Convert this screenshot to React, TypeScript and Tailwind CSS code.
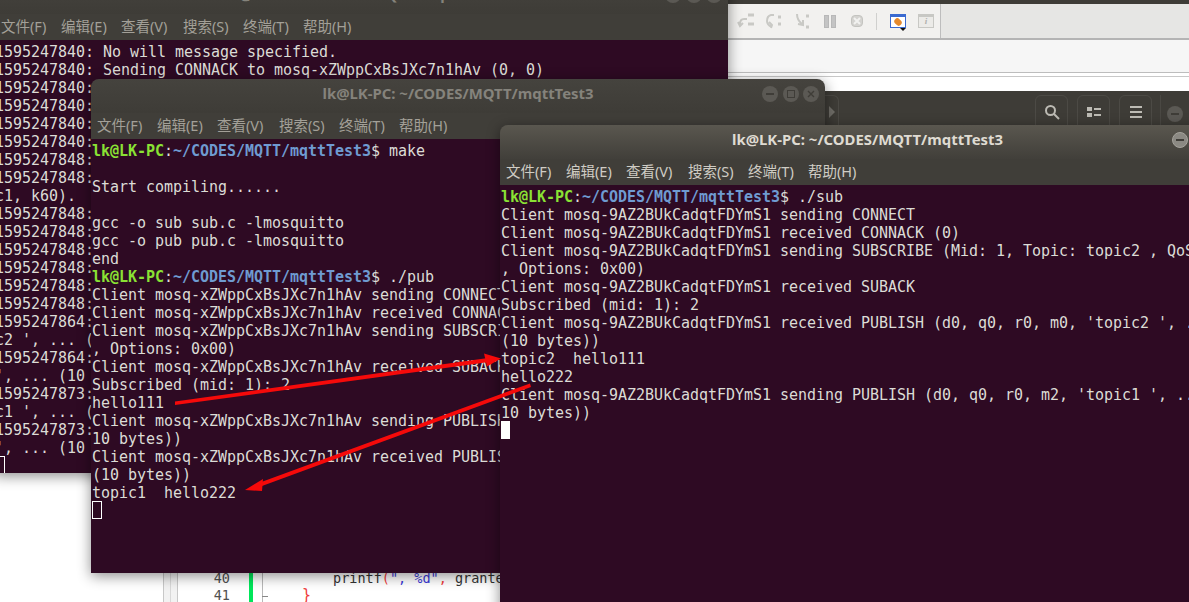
const monoFont = "font-['DejaVu_Sans_Mono','Liberation_Mono',monospace]";
const uiFont = "font-['Noto_Sans','Noto_Sans_CJK_SC',sans-serif]";

const logLines = [
  '1595247840: No will message specified.',
  '1595247840: Sending CONNACK to mosq-xZWppCxBsJXc7n1hAv (0, 0)',
  '1595247840:',
  '1595247840:',
  '1595247840:',
  '1595247840:',
  '1595247848:',
  '1595247848:',
  'c1, k60).',
  '1595247848:',
  '1595247848:',
  '1595247848:',
  '1595247848:',
  '1595247848:',
  '1595247848:',
  '1595247864:',
  "c2 ', ... (",
  '1595247864:',
  "', ... (10 bytes))",
  '1595247873:',
  "c1 ', ... (",
  '1595247873:',
  "', ... (10 bytes))",
];

const pubLines = [
  '$ make',
  '',
  'Start compiling......',
  '',
  'gcc -o sub sub.c -lmosquitto',
  'gcc -o pub pub.c -lmosquitto',
  'end',
  '$ ./pub',
  'Client mosq-xZWppCxBsJXc7n1hAv sending CONNECT',
  'Client mosq-xZWppCxBsJXc7n1hAv received CONNACK (0)',
  'Client mosq-xZWppCxBsJXc7n1hAv sending SUBSCRIBE (Mid: 1, Topic: topic2 , QoS: 0',
  ', Options: 0x00)',
  'Client mosq-xZWppCxBsJXc7n1hAv received SUBACK',
  'Subscribed (mid: 1): 2',
  'hello111',
  "Client mosq-xZWppCxBsJXc7n1hAv sending PUBLISH (d0, q0, r0, m1, 'topic1 ', ... (",
  '10 bytes))',
  "Client mosq-xZWppCxBsJXc7n1hAv received PUBLISH (d0, q0, r0, m0, 'topic1 ', ... ",
  '(10 bytes))',
  'topic1  hello222',
];

const subLines = [
  '$ ./sub',
  'Client mosq-9AZ2BUkCadqtFDYmS1 sending CONNECT',
  'Client mosq-9AZ2BUkCadqtFDYmS1 received CONNACK (0)',
  'Client mosq-9AZ2BUkCadqtFDYmS1 sending SUBSCRIBE (Mid: 1, Topic: topic2 , QoS: 0',
  ', Options: 0x00)',
  'Client mosq-9AZ2BUkCadqtFDYmS1 received SUBACK',
  'Subscribed (mid: 1): 2',
  "Client mosq-9AZ2BUkCadqtFDYmS1 received PUBLISH (d0, q0, r0, m0, 'topic2 ', ... ",
  '(10 bytes))',
  'topic2  hello111',
  'hello222',
  "Client mosq-9AZ2BUkCadqtFDYmS1 sending PUBLISH (d0, q0, r0, m2, 'topic1 ', ... (",
  '10 bytes))',
];

function Line({ text }: { text: string }) {
  if (text.startsWith('$')) {
    return (
      <div className="h-[18px]">
        <span className="font-bold text-[#8ae234]">lk@LK-PC</span>
        <span>:</span>
        <span className="font-bold text-[#6f9bd1]">~/CODES/MQTT/mqttTest3</span>
        <span>{text}</span>
      </div>
    );
  }
  return <div className="h-[18px]">{text}</div>;
}

function Controls({ bright }: { bright?: boolean }) {
  const circle = bright
    ? 'bg-[#8b8983] text-[#3f3d38] border border-[#a5a39c]'
    : 'bg-[#5b5954] text-[#3f3d38]';
  return (
    <div className="flex gap-[4.5px]">
      <div className={`w-4 h-4 rounded-full flex items-center justify-center ${circle}`}>
        <div className="w-2 h-[2px] bg-current" />
      </div>
      <div className={`w-4 h-4 rounded-full flex items-center justify-center ${circle}`}>
        <div className="w-2 h-2 border border-current" />
      </div>
      <div className={`w-4 h-4 rounded-full flex items-center justify-center ${circle}`}>
        <svg viewBox="0 0 8 8" className="w-2 h-2" fill="none" stroke="currentColor" strokeWidth="1.4">
          <path d="M1 1l6 6M7 1l-6 6" />
        </svg>
      </div>
    </div>
  );
}

function Terminal({
  className,
  focused,
  menuPad,
  lines,
  cursor,
}: {
  className: string;
  focused?: boolean;
  menuPad: string;
  lines: string[];
  cursor: 'outline' | 'solid';
}) {
  return (
    <div className={`absolute flex flex-col rounded-t-lg overflow-hidden shadow-[0_3px_14px_rgba(0,0,0,0.45)] ${className}`}>
      <div
        className={`relative h-[34px] shrink-0 flex items-center justify-center pb-[6px] ${uiFont} text-[14.9px] font-bold ${
          focused
            ? 'bg-gradient-to-b from-[#5a574f] to-[#413f3a] text-[#dfdbd2]'
            : 'bg-gradient-to-b from-[#45433e] to-[#3e3c37] text-[#85837c]'
        }`}
      >
        lk@LK-PC: ~/CODES/MQTT/mqttTest3
        <div className="absolute right-[6px] top-[7px]">
          <Controls bright={focused} />
        </div>
      </div>
      <div
        className={`h-[26px] shrink-0 flex items-center bg-[#403e39] ${menuPad} ${uiFont} text-[14.5px] ${
          focused ? 'text-[#cfccc4]' : 'text-[#a3a098]'
        }`}
      >
        <span className="w-[60px]">文件(F)</span>
        <span className="w-[60px]">编辑(E)</span>
        <span className="w-[62px]">查看(V)</span>
        <span className="w-[60px]">搜索(S)</span>
        <span className="w-[60px]">终端(T)</span>
        <span className="w-[60px]">帮助(H)</span>
      </div>
      <div
        className={`flex-1 bg-[#2e0a23] pt-[2px] pl-[1px] text-[#dcdcd6] text-[15px] leading-[20px] tracking-[-0.03px] whitespace-pre ${monoFont}`}
      >
        {lines.map((l, i) => (
          <Line key={i} text={l} />
        ))}
        {cursor === 'outline' ? (
          <div className="w-[10px] h-[18px] border border-white" />
        ) : (
          <div className="w-[9px] h-[18px] bg-white" />
        )}
      </div>
    </div>
  );
}

function ToolbarIcons() {
  return (
    <div className="flex items-center h-full">
      <div className="w-[28px]">
        <svg width="18" height="16" viewBox="0 0 18 16" fill="none" stroke="#c9c9c5" strokeWidth="2">
          <path d="M10 6 H7 Q3 6 3 11 M1 9l2 4 3-3" />
          <path d="M11 2h6M11 11h6" strokeWidth="3" />
        </svg>
      </div>
      <div className="w-[30px]">
        <svg width="18" height="16" viewBox="0 0 18 16" fill="none" stroke="#c9c9c5" strokeWidth="2">
          <path d="M9 2 H6 Q2 3 2 8 Q2 12 7 14 M4 9l3 3-1 3" />
          <path d="M13 4h3M13 11h3" strokeWidth="3" />
        </svg>
      </div>
      <div className="w-[29px]">
        <svg width="14" height="17" viewBox="0 0 14 17" fill="none" stroke="#c9c9c5" strokeWidth="2">
          <path d="M2 1 Q2 7 7 11 M3 11l5 1 0-5" />
          <path d="M11 3h3M11 14h3" strokeWidth="3" />
        </svg>
      </div>
      <div className="w-[27px] flex gap-[2px]">
        <div className="w-[5px] h-[13px] bg-[#c4c4c4] border border-[#b8b8b8]" />
        <div className="w-[5px] h-[13px] bg-[#c4c4c4] border border-[#b8b8b8]" />
      </div>
      <div className="w-[25px]">
        <div className="w-[12px] h-[12px] rounded-sm bg-[#d4d3d0] border border-[#c4c4c0] flex items-center justify-center">
          <svg viewBox="0 0 8 8" className="w-2 h-2" fill="none" stroke="#f2f2f0" strokeWidth="2">
            <path d="M1 1l6 6M7 1l-6 6" />
          </svg>
        </div>
      </div>
      <div className="w-px h-[17px] bg-[#d0d0ce] mr-[13px]" />
      <div className="w-[28px] relative">
        <div className="w-4 h-[14px] bg-white border border-[#3a6ad0] border-t-[3px] flex items-center justify-center">
          <div className="w-2 h-[6px] rounded-full bg-[#e58a2e] rotate-45" />
        </div>
        <div className="absolute left-[10px] top-[14px] w-0 h-0 border-x-[3px] border-t-[3px] border-x-transparent border-t-[#111]" />
      </div>
      <div className="w-[16px] h-[14px] bg-[#ecebe8] border border-[#c8c8c4] border-t-[3px] flex items-center justify-center text-[#b0b0ac] text-[9px] italic font-bold font-['Liberation_Serif',serif]">
        i
      </div>
    </div>
  );
}

function EditorRow({ num, children, tick }: { num: string; children: React.ReactNode; tick?: boolean }) {
  return (
    <div className={`flex h-[17px] items-stretch text-[13.5px] leading-[17px] whitespace-pre ${monoFont}`}>
      <div className="w-[15px] border-x border-[#c8c8c8] bg-[#f2f2f2]">
        <div className="w-[7px] h-full border-r border-[#d8d8d8]" />
      </div>
      <div className="w-[52px] text-right text-[#505050]">{num}</div>
      <div className="w-[19px]" />
      <div className="w-[4px] bg-[#00e65a]" />
      <div className="w-[9px]" />
      <div className="w-px bg-[#b8b8b8] relative">
        {tick && <div className="absolute left-0 top-[9px] w-[6px] h-px bg-[#888]" />}
      </div>
      {children}
    </div>
  );
}

function BackWindow() {
  return (
    <div className="absolute left-[163px] top-[91px] w-[1026px] h-[513px] flex flex-col">
      <div className="h-[60px] shrink-0 bg-[#3e3c37] flex pt-[4px] pl-[662px]">
        <div className="w-[14px] h-[40px] border border-l-0 border-[#4c4a45] rounded-r-md flex items-center justify-center">
          <div className="w-0 h-0 border-y-[6px] border-l-[6px] border-y-transparent border-l-[#6f6d67] mb-[6px]" />
        </div>
        <div className="flex gap-[9px] ml-[196px]">
          <div className="w-[33px] h-[40px] border border-[#4c4a45] rounded-md flex items-center justify-center pb-[6px]">
            <svg width="16" height="16" viewBox="0 0 16 16" fill="none" stroke="#bdbbb4" strokeWidth="2">
              <circle cx="6.5" cy="6.5" r="4.5" />
              <path d="M10 10l5 5" />
            </svg>
          </div>
          <div className="w-[33px] h-[40px] border border-[#4c4a45] rounded-md flex items-center justify-center pb-[6px]">
            <svg width="14" height="12" viewBox="0 0 14 12" fill="#bdbbb4">
              <rect x="0" y="1" width="5" height="4" />
              <rect x="0" y="7" width="5" height="4" />
              <rect x="7" y="2" width="7" height="2" />
              <rect x="7" y="8" width="7" height="2" />
            </svg>
          </div>
          <div className="w-[33px] h-[40px] border border-[#4c4a45] rounded-md flex items-center justify-center pb-[6px]">
            <svg width="12" height="12" viewBox="0 0 12 12" fill="#bdbbb4">
              <rect y="0" width="12" height="2" />
              <rect y="5" width="12" height="2" />
              <rect y="10" width="12" height="2" />
            </svg>
          </div>
        </div>
        <div className="w-px h-[34px] bg-[#4a4843] ml-[8px]" />
        <div className="w-4 h-4 rounded-full bg-[#5b5954] ml-[6px] mt-[11px] flex items-center justify-center">
          <div className="w-2 h-[2px] bg-[#3f3d38]" />
        </div>
      </div>
      <div className="flex-1 bg-white flex flex-col justify-end">
        <EditorRow num="40">
          <span className="pl-[70px] text-[#333]">
            printf<span className="text-[#ef3a3a]">(</span>
            <span className="text-[#3a3ad8]">", %d"</span>
            <span className="text-[#ef3a3a]">,</span> granted_qos
          </span>
        </EditorRow>
        <EditorRow num="41" tick>
          <span className="pl-[39px] text-[#ef3a3a] text-[15px]">{'}'}</span>
        </EditorRow>
      </div>
    </div>
  );
}

function Arrows() {
  return (
    <svg className="absolute inset-0 pointer-events-none" width="1189" height="602" viewBox="0 0 1189 602">
      <path d="M175 401.5 L488 358 L489 362 L175 405 Z" fill="#f50a0a" />
      <path d="M501 358.5 L484 353.5 L487 366.5 Z" fill="#f50a0a" />
      <path d="M530 383.5 L531 387 L262 486 L260 482.5 Z" fill="#f50a0a" />
      <path d="M245 490 L263 479 L262 491 Z" fill="#f50a0a" />
    </svg>
  );
}

export default function App() {
  return (
    <div className="relative w-[1189px] h-[602px] overflow-hidden bg-white flex flex-col">
      <div className="h-[4px] bg-[#3e3c37] shrink-0" />
      <div className="h-[36px] shrink-0 flex bg-[#e6e6e4] border-b-2 border-[#b4b4b4]">
        <div className="w-[941px] pl-[737px] bg-[#f2f1ef] border-r border-[#bdbdbd]">
          <ToolbarIcons />
        </div>
      </div>
      <div className="h-[33px] shrink-0 bg-[#f6f6f6] border-b border-[#bdbdbd]" />
      <div className="h-[4px] shrink-0 bg-white border-b border-[#c8c8c8]" />

      <BackWindow />

      <Terminal
        className="left-[-6px] top-[-20px] w-[734px] h-[493px]"
        menuPad="pl-[7px]"
        lines={logLines}
        cursor="outline"
      />
      <Terminal
        className="left-[91px] top-[79px] w-[734px] h-[494px]"
        menuPad="pl-[6px]"
        lines={pubLines}
        cursor="outline"
      />
      <Terminal
        className="left-[500px] top-[125px] w-[735px] h-[494px]"
        focused
        menuPad="pl-[6px]"
        lines={subLines}
        cursor="solid"
      />
      <Arrows />
    </div>
  );
}
